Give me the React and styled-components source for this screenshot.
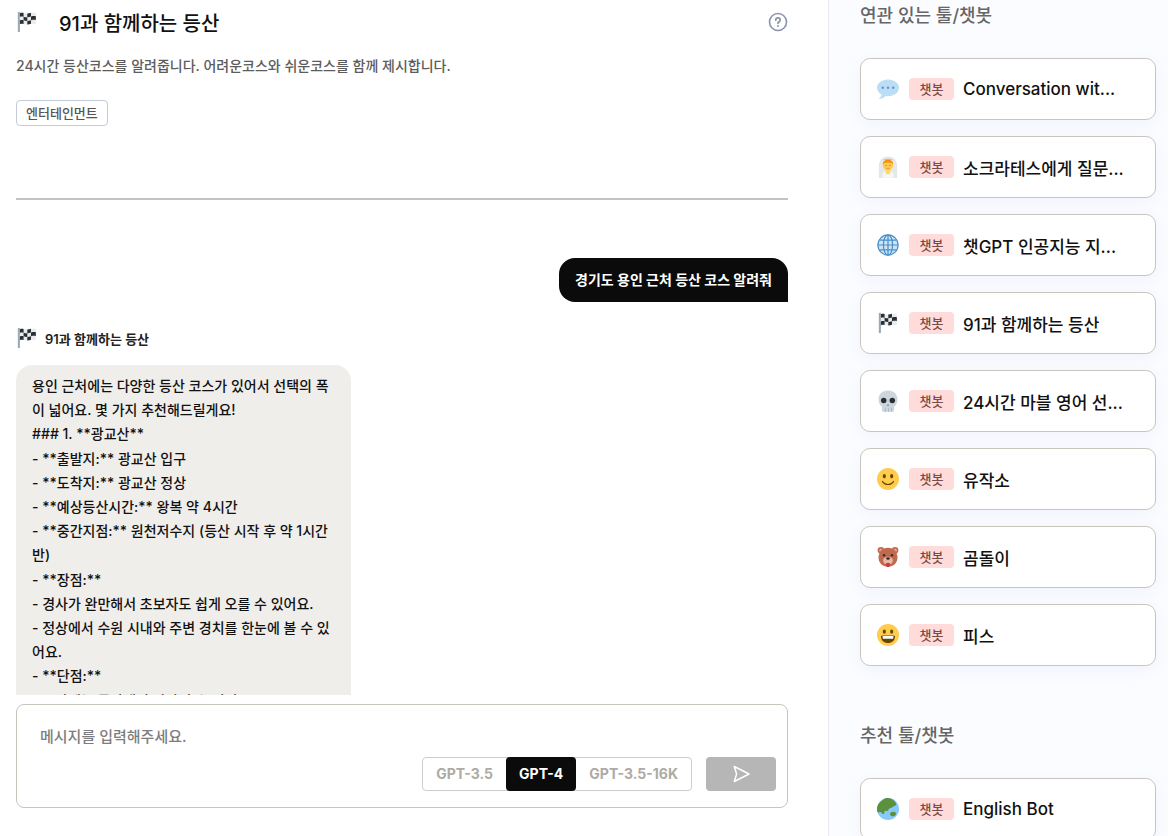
import React from 'react';
import styled, { createGlobalStyle } from 'styled-components';

const GlobalStyle = createGlobalStyle`
  html, body {
    margin: 0;
    height: 100%;
    overflow: hidden;
    background: #fff;
  }
  body {
    font-family: Inter, "Noto Sans CJK KR", sans-serif;
  }
  * {
    box-sizing: border-box;
  }
`;

const Page = styled.div`
  display: flex;
  width: 1168px;
  height: 836px;
  overflow: hidden;
`;
const Main = styled.main`
  display: flex;
  flex-direction: column;
  width: 829px;
  height: 836px;
  padding: 0 40px 28px 16px;
  border-right: 1px solid #e6e9f5;
`;
const Header = styled.header`
  display: flex;
  align-items: center;
  justify-content: space-between;
  height: 44px;
`;
const TitleWrap = styled.div`
  display: flex;
  align-items: center;
  gap: 21px;
`;
const Title = styled.h1`
  margin: 0;
  font-size: 20px;
  font-weight: 500;
  color: #111;
`;
const HelpButton = styled.span`
  display: flex;
  color: #8d93ad;
`;
const Description = styled.p`
  margin: 11px 0 0;
  font-size: 14px;
  line-height: 22px;
  font-weight: 500;
  color: #5c5c5c;
`;
const Tag = styled.span`
  align-self: flex-start;
  margin-top: 23px;
  padding: 0 9px;
  height: 26px;
  line-height: 24px;
  font-size: 13px;
  font-weight: 500;
  color: #555;
  border: 1px solid #c5c9dc;
  border-radius: 4px;
`;
const Divider = styled.hr`
  width: 100%;
  margin: 72px 0 0;
  border: 0;
  border-top: 2px solid #c6c3be;
`;
const ChatLog = styled.div`
  display: flex;
  flex: 1;
  flex-direction: column;
  min-height: 0;
  overflow: hidden;
  padding-top: 58px;
`;
const UserBubble = styled.div`
  align-self: flex-end;
  padding: 0 16px;
  height: 44px;
  line-height: 44px;
  font-size: 14px;
  font-weight: 700;
  color: #fff;
  background: #0b0b0b;
  border-radius: 16px 16px 0 16px;
`;
const BotLabel = styled.div`
  display: flex;
  align-items: center;
  gap: 7px;
  margin-top: 25px;
  height: 22px;
  font-size: 13px;
  font-weight: 600;
  color: #222;
`;
const BotBubble = styled.div`
  flex-shrink: 0;
  width: 335px;
  margin-top: 16px;
  padding: 9px 16px;
  font-size: 14px;
  line-height: 24.2px;
  font-weight: 500;
  color: #111;
  background: #f0eeeb;
  border-radius: 16px 16px 0 0;
`;
const Composer = styled.div`
  display: flex;
  flex-shrink: 0;
  flex-direction: column;
  margin-top: 9px;
  height: 104px;
  padding: 22px 11px 16px 23px;
  border: 1px solid #c8c5bd;
  border-radius: 8px;
`;
const Placeholder = styled.div`
  flex: 1;
  font-size: 15px;
  line-height: 20px;
  font-weight: 500;
  color: #7d7d7d;
`;
const ComposerActions = styled.div`
  display: flex;
  justify-content: flex-end;
  gap: 14px;
`;
const ModelSwitch = styled.div`
  display: flex;
  height: 34px;
  border: 1px solid #cfcdc8;
  border-radius: 4px;
`;
const ModelOption = styled.span`
  margin: -1px 0;
  padding: 0 ${(p) => (p.$active ? '13px' : '13px')};
  line-height: 34px;
  font-size: 14px;
  font-weight: 700;
  color: ${(p) => (p.$active ? '#fff' : '#aeaaa4')};
  background: ${(p) => (p.$active ? '#0b0b0b' : 'transparent')};
  border-radius: 4px;
`;
const SendButton = styled.button`
  display: flex;
  align-items: center;
  justify-content: center;
  width: 70px;
  height: 34px;
  padding: 0;
  border: 0;
  border-radius: 4px;
  color: #fff;
  background: #b6b6b6;
`;
const Aside = styled.aside`
  flex: 1;
  min-width: 0;
  padding: 4px 12px 0 31px;
  background: #fbfcff;
`;
const SectionTitle = styled.h2`
  margin: ${(p) => (p.$first ? '0' : '58px 0 0')};
  font-size: 18px;
  line-height: 24px;
  font-weight: 500;
  color: #666;
`;
const CardList = styled.div`
  display: flex;
  flex-direction: column;
  gap: 16px;
  margin-top: ${(p) => (p.$first ? '30px' : '30px')};
`;
const Card = styled.div`
  display: flex;
  flex-shrink: 0;
  align-items: center;
  height: 62px;
  padding: 0 16px;
  background: #fff;
  border: 1px solid #c8c5bd;
  border-radius: 10px;
  box-shadow: 0 4px 16px rgba(90, 110, 220, 0.06);
`;
const CardIcon = styled.span`
  display: flex;
  flex-shrink: 0;
  margin-right: 10px;
`;
const Badge = styled.span`
  flex-shrink: 0;
  width: 45px;
  height: 22px;
  margin-right: 9px;
  line-height: 22px;
  text-align: center;
  font-size: 13px;
  font-weight: 500;
  color: #7a4a48;
  background: #ffdcd9;
  border-radius: 4px;
`;
const CardName = styled.span`
  overflow: hidden;
  white-space: nowrap;
  font-size: 17px;
  font-weight: 500;
  color: #111;
`;

const Flag = ({ size = 22 }) => (
  <svg width={size} height={size} viewBox="0 0 36 36">
    <path fill="#99aab5" d="M3 1.5h3.4v33H3z" />
    <path fill="#e8ecef" d="M6.4 3.5c5-2 9 1.5 14 .5 4-.8 8-2 12-.7v18c-4-1.2-8 0-12 .8-5 1-9-2.5-14-.5z" />
    <path
      fill="#292f33"
      d="M6.4 3.5c2-.8 4-.7 6-.2v6c-2-.5-4-.6-6 .2zM18.5 4.2c2-.2 4-.7 6-1.2v6c-2 .5-4 1-6 1.2zM12.4 9.3c2 .5 4 1 6.1.9v6c-2.1.1-4.1-.4-6.1-.9zM24.5 9c2.700-.6 5.300-1 8-.4v6.200c-2.700-.6-5.300-.2-8 .4zM6.400 15.500c2-.8 4-.7 6-.2v6c-2-.5-4-.6-6 .2zM18.500 16.200c2-.2 4-.7 6-1.200v6c-2 .5-4 1-6 1.200z"
    />
  </svg>
);

const Bubble = () => (
  <svg width="22" height="22" viewBox="0 0 36 36">
    <path fill="#bbddf5" d="M18 2.500C8 2.500 0 8.500 0 16c0 4.500 2.900 8.500 7.400 11-.4 2.700-2 5.500-5 7.500 4.500 0 9-2.200 12-5 1.200.2 2.400.3 3.600.3 10 0 18-6.200 18-13.800S28 2.500 18 2.500z" />
    <circle fill="#5b9bd0" cx="9.500" cy="16" r="2" />
    <circle fill="#5b9bd0" cx="18" cy="16" r="2" />
    <circle fill="#5b9bd0" cx="26.500" cy="16" r="2" />
  </svg>
);

const Bride = () => (
  <svg width="22" height="22" viewBox="0 0 36 36">
    <path fill="#e6e7e8" d="M18 1C8 1 3 8 3 17v19h30V17C33 8 28 1 18 1z" />
    <path fill="#f5f6f7" d="M9 36v-6c0-4 4-6 9-6s9 2 9 6v6z" />
    <path fill="#ffdc5d" d="M14 20h8v7c0 2-1.800 3-4 3s-4-1-4-3z" />
    <circle fill="#ffcc4d" cx="18" cy="15" r="8.500" />
    <path fill="#f4900c" d="M9.500 14c0-5 3.500-8 8.500-8s8.500 3 8.500 8c-1.500-2-3-3.500-8.500-3.500S11 12 9.500 14z" />
    <path fill="none" stroke="#ffac33" strokeWidth="1.600" d="M11 6.500c2-1.500 12-1.500 14 0" />
    <circle fill="#c1694f" cx="14.800" cy="15.500" r="1" />
    <circle fill="#c1694f" cx="21.200" cy="15.500" r="1" />
    <path fill="#c1694f" d="M15.500 19.500h5v1h-5z" />
  </svg>
);

const Globe = () => (
  <svg width="22" height="22" viewBox="0 0 36 36" fill="none" stroke="#4a90c8" strokeWidth="2">
    <circle fill="#cfe3f3" cx="18" cy="18" r="16.500" />
    <ellipse cx="18" cy="18" rx="7.500" ry="16.500" />
    <path d="M18 1.500v33M1.500 18h33M4 10h28M4 26h28" />
  </svg>
);

const Skull = () => (
  <svg width="22" height="22" viewBox="0 0 36 36">
    <path fill="#ccd6dd" d="M18 1C8 1 2.500 7.500 2.500 15.500c0 5 2 9 5.500 11.500v6c0 1.500 1 2.500 2.500 2.500h15c1.500 0 2.500-1 2.500-2.500v-6c3.500-2.500 5.500-6.500 5.500-11.500C33.500 7.500 28 1 18 1z" />
    <circle fill="#292f33" cx="11" cy="17" r="4.500" />
    <circle fill="#292f33" cx="25" cy="17" r="4.500" />
    <path fill="#8899a6" d="M18 22l2.200 4h-4.400z" />
    <path fill="#99aab5" d="M13 29h1v7h-1zM18 29h1v7h-1zM23 29h1v7h-1z" />
  </svg>
);

const Smile = () => (
  <svg width="22" height="22" viewBox="0 0 36 36">
    <circle fill="#ffcc4d" cx="18" cy="18" r="18" />
    <ellipse fill="#664500" cx="12" cy="13.500" rx="2.500" ry="3.500" />
    <ellipse fill="#664500" cx="24" cy="13.500" rx="2.500" ry="3.500" />
    <path fill="none" stroke="#664500" strokeWidth="2" strokeLinecap="round" d="M9 22c2 3.500 5 5 9 5s7-1.500 9-5" />
  </svg>
);

const Bear = () => (
  <svg width="22" height="22" viewBox="0 0 36 36">
    <circle fill="#c1694f" cx="6.500" cy="7" r="5.500" />
    <circle fill="#c1694f" cx="29.500" cy="7" r="5.500" />
    <circle fill="#e6a08a" cx="6.500" cy="7" r="3" />
    <circle fill="#e6a08a" cx="29.500" cy="7" r="3" />
    <path fill="#c1694f" d="M18 3C9 3 2.500 10 2.500 19c0 9 6.500 15 15.500 15s15.500-6 15.500-15C33.500 10 27 3 18 3z" />
    <circle fill="#292f33" cx="11.500" cy="15" r="2" />
    <circle fill="#292f33" cx="24.500" cy="15" r="2" />
    <ellipse fill="#e6b8a0" cx="18" cy="24" rx="8" ry="6.500" />
    <ellipse fill="#292f33" cx="18" cy="20.500" rx="3" ry="2" />
    <path fill="#dd2e44" d="M15 28h6v4c0 1.500-1.300 2.500-3 2.500s-3-1-3-2.500z" />
  </svg>
);

const Grin = () => (
  <svg width="22" height="22" viewBox="0 0 36 36">
    <circle fill="#ffcc4d" cx="18" cy="18" r="18" />
    <ellipse fill="#664500" cx="12" cy="12.500" rx="2.500" ry="3.500" />
    <ellipse fill="#664500" cx="24" cy="12.500" rx="2.500" ry="3.500" />
    <path fill="#664500" d="M6.500 19.500C8 19 12 18.500 18 18.500s10 .5 11.500 1C29.500 27 24.500 31 18 31S6.500 27 6.500 19.500z" />
    <path fill="#fff" d="M9 20c2-.4 5-.6 9-.6s7 .2 9 .6c0 1.500-.3 2.800-.8 4H9.800C9.300 22.800 9 21.500 9 20z" />
  </svg>
);

const Earth = () => (
  <svg width="22" height="22" viewBox="0 0 36 36">
    <circle fill="#88c9f9" cx="18" cy="18" r="18" />
    <path fill="#5c913b" d="M9 3.500C3.500 7 0 12 0 18c0 2 .5 4 1 5 2 1 3.500-1 5 0 1.500 1 3 4 5 3s.5-4 2-5 3 1 4.500 0 1-3 3-4 4-.5 5.500-2.500 3.500-1 5-3c.5-.7.5-1.500.5-2.500C28 4 23.500 0 18 0c-3 0-6.500 1-9 3.500z" />
    <path fill="#5c913b" d="M22 24c2-1.500 5-2 7-1s3 3 1.500 5-5 2.500-7 1.500-3-4-1.500-5.500z" />
  </svg>
);

const HelpIcon = () => (
  <svg width="20" height="20" viewBox="0 0 20 20" fill="none" stroke="currentColor">
    <circle cx="10" cy="10" r="8.500" strokeWidth="1.600" />
    <path strokeWidth="1.800" strokeLinecap="round" d="M7.800 8c0-1.300 1-2.100 2.200-2.100s2.200.8 2.200 2c0 1.800-2.200 1.800-2.200 3.400" />
    <circle cx="10" cy="14" r="1" fill="currentColor" stroke="none" />
  </svg>
);

const SendIcon = () => (
  <svg width="20" height="20" viewBox="0 0 20 20" fill="none" stroke="currentColor" strokeWidth="1.500" strokeLinejoin="round">
    <path d="M3.300 2.500L18 10 3.300 17.500 5.600 10z" />
  </svg>
);

const related = [
  { icon: <Bubble />, name: 'Conversation wit...' },
  { icon: <Bride />, name: '소크라테스에게 질문...' },
  { icon: <Globe />, name: '챗GPT 인공지능 지...' },
  { icon: <Flag />, name: '91과 함께하는 등산' },
  { icon: <Skull />, name: '24시간 마블 영어 선...' },
  { icon: <Smile />, name: '유작소' },
  { icon: <Bear />, name: '곰돌이' },
  { icon: <Grin />, name: '피스' },
];

const answer = [
  '용인 근처에는 다양한 등산 코스가 있어서 선택의 폭이 넓어요. 몇 가지 추천해드릴게요!',
  '### 1. **광교산**',
  '- **출발지:** 광교산 입구',
  '- **도착지:** 광교산 정상',
  '- **예상등산시간:** 왕복 약 4시간',
  '- **중간지점:** 원천저수지 (등산 시작 후 약 1시간 반)',
  '- **장점:**',
  '- 경사가 완만해서 초보자도 쉽게 오를 수 있어요.',
  '- 정상에서 수원 시내와 주변 경치를 한눈에 볼 수 있어요.',
  '- **단점:**',
  '- 주말에는 등산객이 많아질 수 있어요.',
];

const ToolCard = ({ icon, name }) => (
  <Card>
    <CardIcon>{icon}</CardIcon>
    <Badge>챗봇</Badge>
    <CardName>{name}</CardName>
  </Card>
);

const App = () => {
  return (
    <Page>
      <GlobalStyle />
      <Main>
        <Header>
          <TitleWrap>
            <Flag />
            <Title>91과 함께하는 등산</Title>
          </TitleWrap>
          <HelpButton>
            <HelpIcon />
          </HelpButton>
        </Header>
        <Description>24시간 등산코스를 알려줍니다. 어려운코스와 쉬운코스를 함께 제시합니다.</Description>
        <Tag>엔터테인먼트</Tag>
        <Divider />
        <ChatLog>
          <UserBubble>경기도 용인 근처 등산 코스 알려줘</UserBubble>
          <BotLabel>
            <Flag />
            91과 함께하는 등산
          </BotLabel>
          <BotBubble>
            {answer.map((line) => (
              <div key={line}>{line}</div>
            ))}
          </BotBubble>
        </ChatLog>
        <Composer>
          <Placeholder>메시지를 입력해주세요.</Placeholder>
          <ComposerActions>
            <ModelSwitch>
              <ModelOption>GPT-3.5</ModelOption>
              <ModelOption $active>GPT-4</ModelOption>
              <ModelOption>GPT-3.5-16K</ModelOption>
            </ModelSwitch>
            <SendButton>
              <SendIcon />
            </SendButton>
          </ComposerActions>
        </Composer>
      </Main>
      <Aside>
        <SectionTitle $first>연관 있는 툴/챗봇</SectionTitle>
        <CardList $first>
          {related.map((item) => (
            <ToolCard key={item.name} icon={item.icon} name={item.name} />
          ))}
        </CardList>
        <SectionTitle>추천 툴/챗봇</SectionTitle>
        <CardList>
          <ToolCard icon={<Earth />} name="English Bot" />
        </CardList>
      </Aside>
    </Page>
  );
};

export default App;
